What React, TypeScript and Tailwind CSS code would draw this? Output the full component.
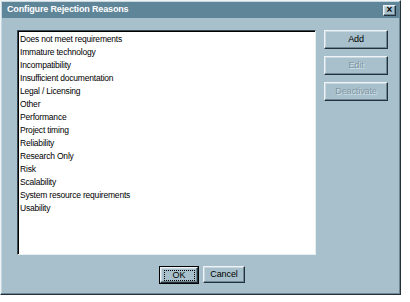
const reasons = [
  "Does not meet requirements",
  "Immature technology",
  "Incompatibility",
  "Insufficient documentation",
  "Legal / Licensing",
  "Other",
  "Performance",
  "Project timing",
  "Reliability",
  "Research Only",
  "Risk",
  "Scalability",
  "System resource requirements",
  "Usability",
];

const raised =
  "border border-t-[#eef3f6] border-l-[#eef3f6] border-r-[#23323a] border-b-[#23323a] shadow-[inset_-1px_-1px_0_#6f8793,inset_1px_1px_0_#c9d8e0]";

function Button({
  label,
  disabled,
  focused,
  className = "",
}: {
  label: string;
  disabled?: boolean;
  focused?: boolean;
  className?: string;
}) {
  return (
    <button
      className={`flex h-[19px] items-center justify-center bg-[#a8c0cc] text-[9px] leading-none tracking-[-0.1px] ${raised} ${
        disabled ? "text-[#7f97a3] [text-shadow:1px_1px_0_#d4e2e9]" : "text-black"
      } ${className}`}
    >
      {focused ? (
        <span className="flex h-[11px] w-[31px] items-center justify-center border border-dotted border-black">
          {label}
        </span>
      ) : (
        label
      )}
    </button>
  );
}

export default function App() {
  return (
    <div
      className="h-[302px] w-[410px] bg-white"
      style={{ fontFamily: '"Liberation Sans", Arial, sans-serif' }}
    >
      <div
        className={`flex h-[295px] w-[401px] flex-col bg-[#a8c0cc] p-[1px] ${raised} shadow-[3px_3px_3px_rgba(0,0,0,0.45)]`}
      >
        {/* title bar */}
        <div className="flex h-[16px] items-center bg-[#5f8598] pl-[5px] pr-[3px]">
          <span className="text-[9px] font-bold tracking-[-0.15px] text-white">
            Configure Rejection Reasons
          </span>
          <div
            className={`ml-auto flex h-[11px] w-[13px] items-center justify-center bg-[#a8c0cc] text-[10px] font-bold leading-none text-black ${raised}`}
          >
            ×
          </div>
        </div>

        {/* body */}
        <div className="flex pl-[15px] pt-[12px]">
          <div className="h-[225px] w-[299px] border border-t-[#3a4a52] border-l-[#3a4a52] border-r-[#e6eef2] border-b-[#e6eef2] bg-white pl-[2px] pt-[2px] shadow-[inset_1px_1px_0_#000]">
            {reasons.map((r) => (
              <div key={r} className="h-[13px] text-[8.5px] leading-[13px] tracking-[-0.2px] text-black">
                {r}
              </div>
            ))}
          </div>
          <div className="ml-[8px] flex flex-col gap-[7px]">
            <Button label="Add" className="w-[64px]" />
            <Button label="Edit" disabled className="w-[64px]" />
            <Button label="Deactivate" disabled className="w-[64px]" />
          </div>
        </div>

        {/* footer */}
        <div className="mt-[11px] flex justify-center gap-[4px] pl-[3px]">
          <div className="border border-black">
            <Button label="OK" focused className="w-[38px] !h-[16px]" />
          </div>
          <Button label="Cancel" className="w-[42px] !h-[17px]" />
        </div>
      </div>
    </div>
  );
}
